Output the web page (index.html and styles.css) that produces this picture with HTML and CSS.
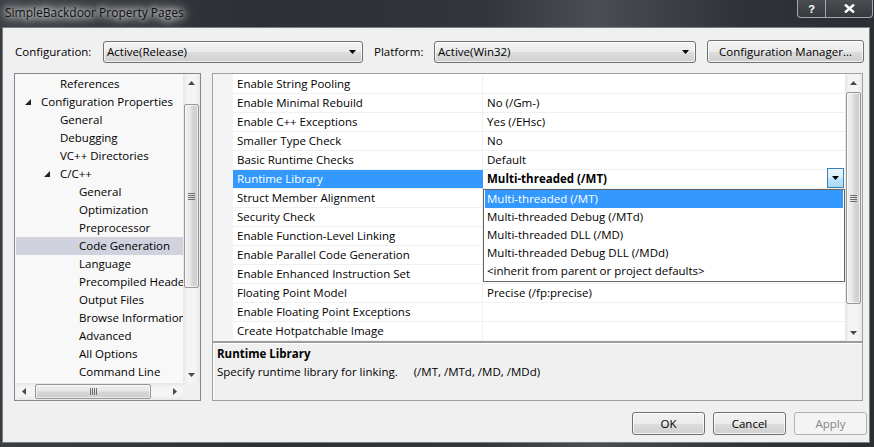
FILE: index.html
```html
<!DOCTYPE html>
<html>
<head>
<meta charset="utf-8">
<title>SimpleBackdoor Property Pages</title>
<link rel="stylesheet" href="styles.css">
</head>
<body>
<div class="window">
  <div class="titlebar">
    <div class="title">SimpleBackdoor Property Pages</div>
    <div class="caption">
      <div class="capbtn cap-help">?</div>
      <div class="capbtn cap-close">
        <svg width="11" height="9" viewBox="0 0 11 9"><path d="M1 0.5 L10 8.5 M10 0.5 L1 8.5" stroke="#fff" stroke-width="2.4"/></svg>
      </div>
    </div>
  </div>
  <div class="client">
    <div class="toprow">
      <span class="lbl lbl-conf">Configuration:</span>
      <div class="combo combo-conf">
        <span class="combo-text">Active(Release)</span>
        <svg class="combo-arrow" width="7" height="4" viewBox="0 0 7 4"><path d="M0 0 L7 0 L3.5 4Z" fill="#000"/></svg>
      </div>
      <span class="lbl lbl-plat">Platform:</span>
      <div class="combo combo-plat">
        <span class="combo-text">Active(Win32)</span>
        <svg class="combo-arrow" width="7" height="4" viewBox="0 0 7 4"><path d="M0 0 L7 0 L3.5 4Z" fill="#000"/></svg>
      </div>
      <div class="btn btn-cm">Configuration Manager...</div>
    </div>

    <div class="main">
      <div class="tree">
        <div class="tree-top">
          <div class="tree-rows">
            <div class="trow lv1"><span class="exp"></span>References</div>
            <div class="trow lv0"><span class="exp"><svg width="6" height="6" viewBox="0 0 6 6"><path d="M6 0 L6 6 L0 6Z" fill="#222"/></svg></span>Configuration Properties</div>
            <div class="trow lv1"><span class="exp"></span>General</div>
            <div class="trow lv1"><span class="exp"></span>Debugging</div>
            <div class="trow lv1"><span class="exp"></span>VC++ Directories</div>
            <div class="trow lv1"><span class="exp"><svg width="6" height="6" viewBox="0 0 6 6"><path d="M6 0 L6 6 L0 6Z" fill="#222"/></svg></span>C/C++</div>
            <div class="trow lv2"><span class="exp"></span>General</div>
            <div class="trow lv2"><span class="exp"></span>Optimization</div>
            <div class="trow lv2"><span class="exp"></span>Preprocessor</div>
            <div class="trow lv2 tsel"><span class="exp"></span>Code Generation</div>
            <div class="trow lv2"><span class="exp"></span>Language</div>
            <div class="trow lv2"><span class="exp"></span>Precompiled Headers</div>
            <div class="trow lv2"><span class="exp"></span>Output Files</div>
            <div class="trow lv2"><span class="exp"></span>Browse Information</div>
            <div class="trow lv2"><span class="exp"></span>Advanced</div>
            <div class="trow lv2"><span class="exp"></span>All Options</div>
            <div class="trow lv2"><span class="exp"></span>Command Line</div>
          </div>
          <div class="vscroll tree-vs">
            <div class="sb-btn"><svg width="7" height="4" viewBox="0 0 7 4"><path d="M3.5 0 L7 4 L0 4Z" fill="#4a4a4a"/></svg></div>
            <div class="sb-thumb-v tree-thumb">
              <svg width="7" height="7" viewBox="0 0 7 7"><path d="M0 0.5H7M0 2.5H7M0 4.5H7M0 6.5H7" stroke="#6d6d6d" stroke-width="1"/></svg>
            </div>
            <div class="sb-fill"></div>
            <div class="sb-btn"><svg width="7" height="4" viewBox="0 0 7 4"><path d="M0 0 L7 0 L3.5 4Z" fill="#4a4a4a"/></svg></div>
          </div>
        </div>
        <div class="tree-bottom">
          <div class="hscroll">
            <div class="sb-btn-h"><svg width="4" height="7" viewBox="0 0 4 7"><path d="M0 3.5 L4 0 L4 7Z" fill="#4a4a4a"/></svg></div>
            <div class="sb-thumb-h">
              <svg width="7" height="7" viewBox="0 0 7 7"><path d="M0.5 0V7M2.5 0V7M4.5 0V7M6.5 0V7" stroke="#6d6d6d" stroke-width="1"/></svg>
            </div>
            <div class="sb-fill"></div>
            <div class="sb-btn-h"><svg width="4" height="7" viewBox="0 0 4 7"><path d="M0 0 L4 3.5 L0 7Z" fill="#4a4a4a"/></svg></div>
          </div>
          <div class="corner"></div>
        </div>
      </div>

      <div class="right">
        <div class="grid">
          <div class="grid-rows">
            <div class="grow"><div class="gut"></div><div class="gname">Enable String Pooling</div><div class="gval"></div></div>
            <div class="grow"><div class="gut"></div><div class="gname">Enable Minimal Rebuild</div><div class="gval">No (/Gm-)</div></div>
            <div class="grow"><div class="gut"></div><div class="gname">Enable C++ Exceptions</div><div class="gval">Yes (/EHsc)</div></div>
            <div class="grow"><div class="gut"></div><div class="gname">Smaller Type Check</div><div class="gval">No</div></div>
            <div class="grow"><div class="gut"></div><div class="gname">Basic Runtime Checks</div><div class="gval">Default</div></div>
            <div class="grow gsel"><div class="gut"></div><div class="gname">Runtime Library</div><div class="gval gval-edit"><b>Multi-threaded (/MT)</b>
              <div class="dd-btn"><svg width="7" height="4" viewBox="0 0 7 4"><path d="M0 0 L7 0 L3.5 4Z" fill="#000"/></svg></div></div></div>
            <div class="grow"><div class="gut"></div><div class="gname">Struct Member Alignment</div><div class="gval"></div></div>
            <div class="grow"><div class="gut"></div><div class="gname">Security Check</div><div class="gval"></div></div>
            <div class="grow"><div class="gut"></div><div class="gname">Enable Function-Level Linking</div><div class="gval"></div></div>
            <div class="grow"><div class="gut"></div><div class="gname">Enable Parallel Code Generation</div><div class="gval"></div></div>
            <div class="grow"><div class="gut"></div><div class="gname">Enable Enhanced Instruction Set</div><div class="gval"></div></div>
            <div class="grow"><div class="gut"></div><div class="gname">Floating Point Model</div><div class="gval">Precise (/fp:precise)</div></div>
            <div class="grow"><div class="gut"></div><div class="gname">Enable Floating Point Exceptions</div><div class="gval"></div></div>
            <div class="grow"><div class="gut"></div><div class="gname">Create Hotpatchable Image</div><div class="gval"></div></div>

            <div class="dropdown">
              <div class="dd-item dd-sel">Multi-threaded (/MT)</div>
              <div class="dd-item">Multi-threaded Debug (/MTd)</div>
              <div class="dd-item">Multi-threaded DLL (/MD)</div>
              <div class="dd-item">Multi-threaded Debug DLL (/MDd)</div>
              <div class="dd-item">&lt;inherit from parent or project defaults&gt;</div>
            </div>
          </div>
          <div class="vscroll grid-vs">
            <div class="sb-btn"><svg width="7" height="4" viewBox="0 0 7 4"><path d="M3.5 0 L7 4 L0 4Z" fill="#4a4a4a"/></svg></div>
            <div class="sb-thumb-v grid-thumb">
              <svg width="7" height="7" viewBox="0 0 7 7"><path d="M0 0.5H7M0 2.5H7M0 4.5H7M0 6.5H7" stroke="#6d6d6d" stroke-width="1"/></svg>
            </div>
            <div class="sb-fill"></div>
            <div class="sb-btn"><svg width="7" height="4" viewBox="0 0 7 4"><path d="M0 0 L7 0 L3.5 4Z" fill="#4a4a4a"/></svg></div>
          </div>
        </div>
        <div class="desc">
          <div class="desc-title">Runtime Library</div>
          <div class="desc-text">Specify runtime library for linking.<span class="desc-tab">(/MT, /MTd, /MD, /MDd)</span></div>
        </div>
      </div>
    </div>

    <div class="buttons">
      <div class="btn dlg-btn">OK</div>
      <div class="btn dlg-btn">Cancel</div>
      <div class="btn dlg-btn btn-disabled">Apply</div>
    </div>
  </div>
</div>
</body>
</html>
```

FILE: styles.css
```css
* { box-sizing: border-box; }
html, body { margin: 0; padding: 0; }
body {
  width: 874px;
  height: 447px;
  overflow: hidden;
  font-family: "Segoe UI", "Open Sans", "Noto Sans", sans-serif;
  font-size: 11.5px;
  color: #000;
  background: #2b2e32;
}

.window {
  width: 874px;
  height: 447px;
  display: flex;
  flex-direction: column;
  background: linear-gradient(90deg, #3a3e43 0%, #2c2f33 30%, #32363a 55%, #4a4d51 68%, #2f3236 85%, #2a2d31 100%);
}

/* title bar */
.titlebar {
  height: 27px;
  flex: none;
  display: flex;
  align-items: flex-start;
}
.title {
  padding-left: 5px;
  line-height: 26px;
  font-size: 12px;
  color: #111;
  text-shadow: 0 0 6px #ffffff, 0 0 10px rgba(255,255,255,.9), 0 0 16px rgba(255,255,255,.8), 0 0 22px rgba(255,255,255,.6);
}
.caption {
  margin-left: auto;
  margin-right: 1px;
  display: flex;
  height: 18px;
  border: 1px solid #a3a8ad;
  border-top: none;
  border-radius: 0 0 4px 4px;
  overflow: hidden;
  background: linear-gradient(#4a4e53, #363a3e);
}
.capbtn {
  height: 17px;
  display: flex;
  align-items: center;
  justify-content: center;
  color: #fff;
  font-weight: bold;
  font-family: "Liberation Sans", sans-serif;
  font-size: 11px;
}
.cap-help { width: 28px; border-right: 1px solid #a3a8ad; }
.cap-close { width: 46px; }

/* client */
.client {
  flex: 1;
  margin: 0 4px 4px 2px;
  border: 1px solid #7a7e83;
  background: #f0f0f0;
  padding: 12px 0 0 11px;
  display: flex;
  flex-direction: column;
}

.toprow {
  display: flex;
  align-items: center;
  height: 23px;
}
.lbl { white-space: nowrap; }
.lbl-conf { width: 89px; padding-left: 1px; }
.lbl-plat { width: 71px; padding-left: 11px; }

.combo {
  height: 22px;
  display: flex;
  align-items: center;
  border: 1px solid #707070;
  border-radius: 3px;
  background: linear-gradient(#f2f2f2 0%, #ebebeb 50%, #dddddd 51%, #cfcfcf 100%);
  box-shadow: inset 0 0 0 1px rgba(255,255,255,.7);
  padding: 0 6px 0 3px;
}
.combo-conf { width: 260px; }
.combo-plat { width: 262px; }
.combo-text { flex: 1; white-space: nowrap; }
.combo-arrow { flex: none; }

.btn {
  display: flex;
  align-items: center;
  justify-content: center;
  border: 1px solid #707070;
  border-radius: 3px;
  background: linear-gradient(#f2f2f2 0%, #ebebeb 50%, #dddddd 51%, #cfcfcf 100%);
  box-shadow: inset 0 0 0 1px rgba(255,255,255,.75);
  white-space: nowrap;
}
.btn-cm { width: 157px; height: 23px; margin-left: 11px; }

/* main area */
.main {
  margin-top: 10px;
  display: flex;
  gap: 11px;
  height: 328px;
}

.tree {
  width: 187px;
  height: 328px;
  border: 1px solid #828790;
  background: #f8f8f8;
  display: flex;
  flex-direction: column;
}
.tree-top { flex: 1; display: flex; min-height: 0; }
.tree-rows {
  flex: 1;
  min-width: 0;
  overflow: hidden;
  padding-top: 1px;
}
.trow {
  height: 18px;
  line-height: 18px;
  white-space: nowrap;
  display: flex;
  align-items: center;
  margin-left: 1px;
}
.trow.lv0 { padding-left: 9px; }
.trow.lv1 { padding-left: 28px; }
.trow.lv2 { padding-left: 47px; }
.exp { width: 16px; flex: none; display: flex; align-items: center; }
.tsel { background: #d0d3de; }

.vscroll {
  width: 17px;
  flex: none;
  display: flex;
  flex-direction: column;
  align-items: center;
  background: linear-gradient(90deg, #e6e6e6 0%, #f4f4f4 25%, #f4f4f4 75%, #e8e8e8 100%);
}
.sb-btn {
  width: 17px;
  height: 17px;
  flex: none;
  display: flex;
  align-items: center;
  justify-content: center;
}
.sb-fill { flex: 1; }
.sb-thumb-v {
  width: 15px;
  flex: none;
  border: 1px solid #979797;
  border-radius: 2px;
  background: linear-gradient(90deg, #f1f1f1 0%, #e6e6e6 45%, #d6d6d6 55%, #cdcdcd 100%);
  box-shadow: inset 0 0 0 1px rgba(255,255,255,.6);
  display: flex;
  align-items: center;
  justify-content: center;
}
.tree-thumb { margin-top: 13px; height: 184px; }
.grid-thumb { margin-top: 1px; height: 212px; }

.tree-bottom { height: 17px; flex: none; display: flex; }
.hscroll {
  flex: 1;
  display: flex;
  align-items: center;
  background: linear-gradient(#e6e6e6 0%, #f4f4f4 25%, #f4f4f4 75%, #e8e8e8 100%);
}
.sb-btn-h {
  width: 17px;
  height: 17px;
  flex: none;
  display: flex;
  align-items: center;
  justify-content: center;
}
.sb-thumb-h {
  margin-left: 3px;
  width: 116px;
  height: 15px;
  border: 1px solid #979797;
  border-radius: 2px;
  background: linear-gradient(#f1f1f1 0%, #e6e6e6 45%, #d6d6d6 55%, #cdcdcd 100%);
  box-shadow: inset 0 0 0 1px rgba(255,255,255,.6);
  display: flex;
  align-items: center;
  justify-content: center;
}
.corner { width: 17px; flex: none; background: #f0f0f0; }

/* property grid */
.right {
  width: 651px;
  display: flex;
  flex-direction: column;
}
.grid {
  height: 269px;
  flex: none;
  border: 1px solid #a0a0a0;
  background: #fff;
  display: flex;
}
.grid-rows {
  flex: 1;
  position: relative;
  overflow: hidden;
  padding-top: 1px;
  background: linear-gradient(90deg, #f4f4f4 20px, #fff 20px);
}
.grow {
  display: flex;
  height: 19px;
}
.gut { width: 20px; flex: none; background: #f4f4f4; }
.gname {
  width: 250px;
  flex: none;
  padding-left: 4px;
  line-height: 18px;
  border-bottom: 1px solid #f0f0f0;
  border-right: 1px solid #f0f0f0;
  white-space: nowrap;
  overflow: hidden;
}
.gval {
  flex: 1;
  padding-left: 4px;
  line-height: 18px;
  border-bottom: 1px solid #f0f0f0;
  white-space: nowrap;
  position: relative;
}
.gsel .gname { background: #3399ff; color: #fff; border-right-color: #3399ff; }
.gval-edit b { font-weight: bold; }
.dd-btn {
  position: absolute;
  right: 1px;
  top: -2px;
  width: 17px;
  height: 20px;
  border: 1px solid #3c7fb1;
  background: linear-gradient(#eaf6fd 0%, #d9f0fc 50%, #bee6fd 51%, #a7d9f5 100%);
  display: flex;
  align-items: center;
  justify-content: center;
}

.dropdown {
  position: absolute;
  left: 270px;
  top: 115px;
  width: 362px;
  height: 93px;
  border: 1px solid #646464;
  background: #fff;
  padding: 0 1px;
}
.dd-item {
  height: 18px;
  line-height: 18px;
  padding-left: 2px;
  white-space: nowrap;
}
.dd-sel { background: #3399ff; color: #fff; }

/* description */
.desc {
  height: 59px;
  flex: none;
  border: 1px solid #a0a0a0;
  border-top-color: #9a9a9a;
  box-shadow: inset 1px 1px 0 #fff;
  background: #f0f0f0;
  padding: 2px 0 0 4px;
  line-height: 18px;
}
.desc-title { font-weight: bold; }
.desc-tab { margin-left: 16px; }

/* dialog buttons */
.buttons {
  margin-top: 11px;
  display: flex;
  justify-content: flex-end;
  gap: 8px;
  padding-right: 2px;
}
.dlg-btn { width: 73px; height: 23px; }
.btn-disabled {
  border-color: #adb2b5;
  background: #f4f4f4;
  box-shadow: none;
  color: #838383;
}
```
